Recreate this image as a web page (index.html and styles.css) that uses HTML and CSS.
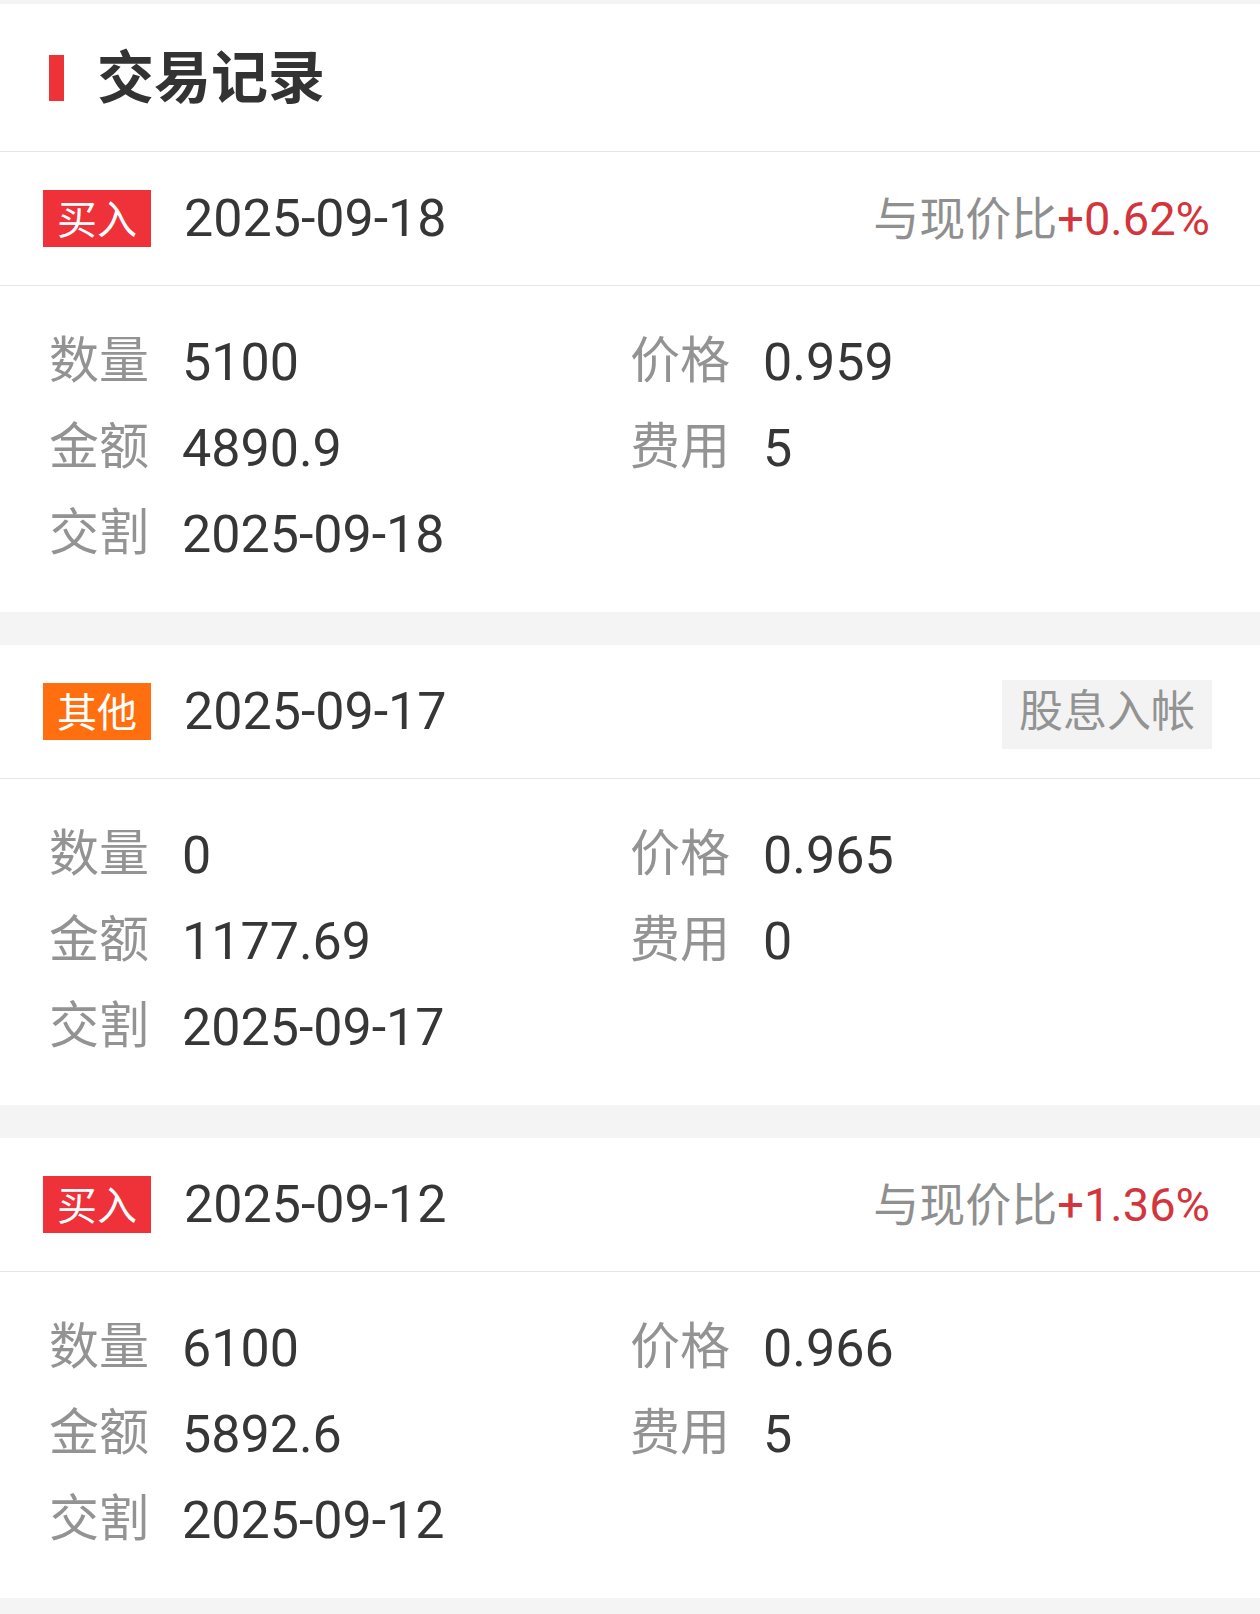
FILE: index.html
```html
<!DOCTYPE html>
<html lang="zh-CN">
<head>
<meta charset="utf-8">
<title>交易记录</title>
<link rel="stylesheet" href="styles.css">
</head>
<body>
<div class="page">
  <section class="title-bar">
    <span class="mark"></span>
    <h1 class="title">交易记录</h1>
  </section>

  <section class="card">
    <div class="card-head">
      <span class="badge badge-buy">买入</span>
      <span class="date">2025-09-18</span>
      <span class="compare">与现价比<em class="pct">+0.62%</em></span>
    </div>
    <div class="details">
      <div class="cell"><span class="label">数量</span><span class="value">5100</span></div>
      <div class="cell"><span class="label">价格</span><span class="value">0.959</span></div>
      <div class="cell"><span class="label">金额</span><span class="value">4890.9</span></div>
      <div class="cell"><span class="label">费用</span><span class="value">5</span></div>
      <div class="cell"><span class="label">交割</span><span class="value">2025-09-18</span></div>
    </div>
  </section>

  <section class="card">
    <div class="card-head">
      <span class="badge badge-other">其他</span>
      <span class="date">2025-09-17</span>
      <span class="tag">股息入帐</span>
    </div>
    <div class="details">
      <div class="cell"><span class="label">数量</span><span class="value">0</span></div>
      <div class="cell"><span class="label">价格</span><span class="value">0.965</span></div>
      <div class="cell"><span class="label">金额</span><span class="value">1177.69</span></div>
      <div class="cell"><span class="label">费用</span><span class="value">0</span></div>
      <div class="cell"><span class="label">交割</span><span class="value">2025-09-17</span></div>
    </div>
  </section>

  <section class="card">
    <div class="card-head">
      <span class="badge badge-buy">买入</span>
      <span class="date">2025-09-12</span>
      <span class="compare">与现价比<em class="pct">+1.36%</em></span>
    </div>
    <div class="details">
      <div class="cell"><span class="label">数量</span><span class="value">6100</span></div>
      <div class="cell"><span class="label">价格</span><span class="value">0.966</span></div>
      <div class="cell"><span class="label">金额</span><span class="value">5892.6</span></div>
      <div class="cell"><span class="label">费用</span><span class="value">5</span></div>
      <div class="cell"><span class="label">交割</span><span class="value">2025-09-12</span></div>
    </div>
  </section>
</div>
</body>
</html>
```

FILE: styles.css
```css
* {
  box-sizing: border-box;
}

html, body {
  margin: 0;
  padding: 0;
  background: #f4f4f4;
}

body {
  font-family: Roboto, "Noto Sans CJK SC", sans-serif;
  color: #363636;
}

.page {
  padding-top: 4px;
  display: flex;
  flex-direction: column;
  gap: 33px;
}

.title-bar {
  height: 148px;
  background: #ffffff;
  border-bottom: 1px solid #e6e6e6;
  display: flex;
  align-items: center;
  padding-left: 49px;
  margin-bottom: -33px;
}

.mark {
  width: 15px;
  height: 46px;
  background: #ee3338;
}

.title {
  margin: 0 0 8px 33px;
  font-family: "Noto Sans CJK SC", sans-serif;
  font-size: 57px;
  font-weight: 700;
  line-height: 1;
  color: #333333;
}

.card {
  background: #ffffff;
}

.card-head {
  height: 134px;
  border-bottom: 1px solid #e6e6e6;
  display: flex;
  align-items: center;
  padding: 0 50px 0 43px;
}

.badge {
  width: 108px;
  height: 57px;
  padding-bottom: 3px;
  display: flex;
  align-items: center;
  justify-content: center;
  font-family: "Noto Sans CJK SC", sans-serif;
  font-size: 40px;
  color: #ffffff;
  line-height: 1;
}

.badge-buy {
  background: #ef3139;
}

.badge-other {
  background: #ff6f10;
}

.date {
  margin-left: 33px;
  font-size: 52px;
  color: #363636;
  line-height: 1;
}

.compare {
  margin-left: auto;
  font-size: 46px;
  color: #8f8f8f;
  line-height: 1;
  white-space: nowrap;
}

.pct {
  font-style: normal;
  font-size: 47px;
  color: #d4343c;
}

.tag {
  margin-left: auto;
  margin-right: -2px;
  margin-top: 5px;
  height: 69px;
  padding: 0 17px 4px;
  display: flex;
  align-items: center;
  background: #f3f3f3;
  font-size: 44px;
  color: #939393;
  line-height: 1;
  white-space: nowrap;
}

.details {
  display: grid;
  grid-template-columns: 1fr 1fr;
  padding: 32px 49px 36px 49px;
}

.cell {
  height: 86px;
  display: flex;
  align-items: center;
  white-space: nowrap;
}

.label {
  flex: none;
  width: 100px;
  padding-bottom: 10px;
  font-family: "Noto Sans CJK SC", sans-serif;
  font-size: 50px;
  color: #939393;
  line-height: 1;
}

.value {
  margin-left: 33px;
  padding-top: 4px;
  font-size: 52px;
  color: #363636;
  line-height: 1;
}
```
